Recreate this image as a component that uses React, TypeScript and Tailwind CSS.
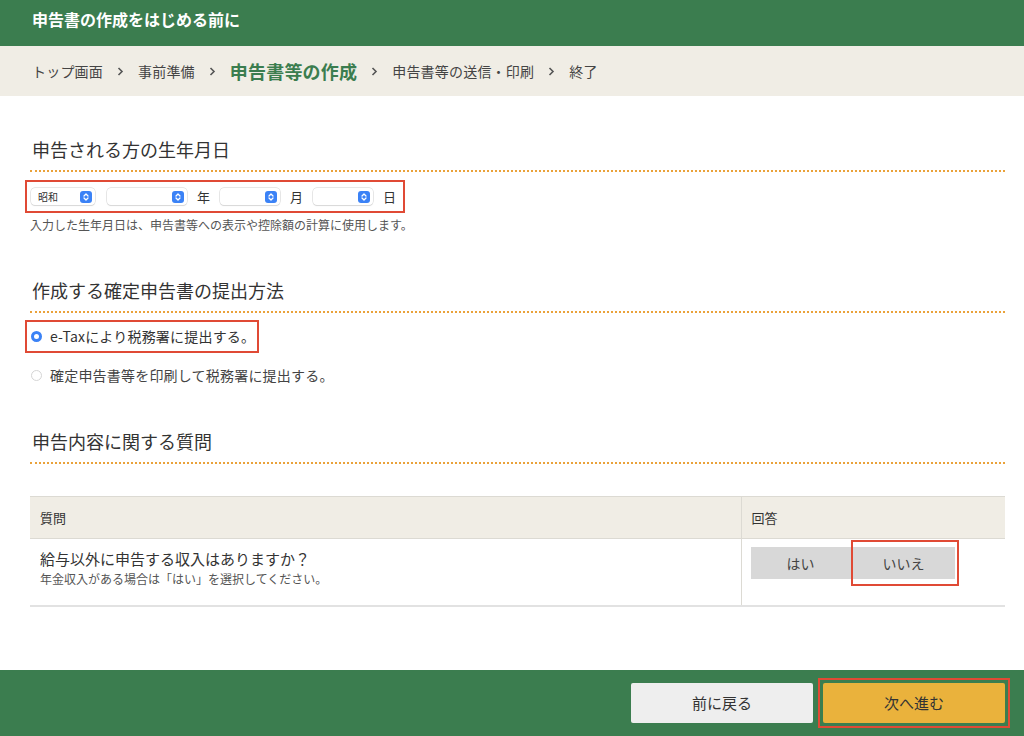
import React from "react";

const jp = { fontFamily: '"Noto Sans CJK JP", "Noto Sans", sans-serif' };

const SelectBox = ({ label, width }: { label?: string; width: string }) => (
  <div
    className={`${width} h-[17px] flex items-center justify-between bg-white rounded-[4px] pl-[7px] pr-[3px] shadow-[0_0_0_0.5px_#d0d0d0,0_1px_1px_rgba(0,0,0,0.12)]`}
  >
    <span className="text-[10px] leading-none text-[#333]">{label}</span>
    <span className="w-[12px] h-[12px] rounded-[3px] bg-[#3b82f6] flex items-center justify-center">
      <svg width="8" height="10" viewBox="0 0 8 10" fill="none">
        <path d="M2 4L4 2L6 4" stroke="white" strokeWidth="1.3" strokeLinecap="round" strokeLinejoin="round" />
        <path d="M2 6L4 8L6 6" stroke="white" strokeWidth="1.3" strokeLinecap="round" strokeLinejoin="round" />
      </svg>
    </span>
  </div>
);

const SectionTitle = ({ children }: { children: React.ReactNode }) => (
  <div>
    <h2 className="text-[18px] leading-[26px] text-[#333] pl-[2px]">{children}</h2>
    <div className="mt-[8px] border-b-2 border-dotted border-[#eaa23a]" />
  </div>
);

const Crumb = ({ children }: { children: React.ReactNode }) => (
  <span className="text-[14px] tracking-[0.2px] text-[#444]">{children}</span>
);

const Arrow = () => (
  <span className="mx-[14px] flex items-center">
    <svg width="7" height="9" viewBox="0 0 7 9" fill="none">
      <path d="M1.5 1L5 4.5L1.5 8" stroke="#555" strokeWidth="1.6" />
    </svg>
  </span>
);

export default function App() {
  return (
    <div className="w-[1024px] h-[736px] bg-white flex flex-col overflow-hidden" style={jp}>
      <header className="h-[46px] bg-[#3b7d4f] flex items-center px-[32px]">
        <h1 className="text-[16px] font-bold text-white -mt-[9px]">申告書の作成をはじめる前に</h1>
      </header>

      <nav className="h-[50px] bg-[#f0ede5] flex items-center px-[32px]">
        <Crumb>トップ画面</Crumb>
        <Arrow />
        <Crumb>事前準備</Crumb>
        <Arrow />
        <span className="text-[18px] font-bold tracking-[0.2px] text-[#3b7d4f]">申告書等の作成</span>
        <Arrow />
        <Crumb>申告書等の送信・印刷</Crumb>
        <Arrow />
        <Crumb>終了</Crumb>
      </nav>

      <main className="flex-1 pl-[30px] pr-[19px] pt-[40px]">
        <SectionTitle>申告される方の生年月日</SectionTitle>
        <div className="mt-[8px] w-[380px] h-[33px] -ml-[5px] border-2 border-[#e04a35] flex items-center gap-[10px] pl-[4px]">
          <SelectBox label="昭和" width="w-[64px]" />
          <div className="ml-[2px]">
            <SelectBox width="w-[80px]" />
          </div>
          <span className="text-[13px] text-[#333]">年</span>
          <SelectBox width="w-[60px]" />
          <span className="text-[13px] text-[#333]">月</span>
          <SelectBox width="w-[60px]" />
          <span className="text-[13px] text-[#333]">日</span>
        </div>
        <p className="mt-[3px] text-[12px] leading-[18px] text-[#555]">入力した生年月日は、申告書等への表示や控除額の計算に使用します。</p>

        <div className="mt-[43px]">
          <SectionTitle>作成する確定申告書の提出方法</SectionTitle>
        </div>
        <div className="mt-[7px] -ml-[5px] w-[234px] h-[33px] border-2 border-[#e04a35] flex items-center pl-[4px] gap-[8px]">
          <span className="w-[11px] h-[11px] rounded-full border-[3px] border-[#3b82f6] bg-white" />
          <span className="text-[14px] tracking-[0.2px] text-[#333]">e-Taxにより税務署に提出する。</span>
        </div>
        <div className="mt-[12px] flex items-center gap-[8px] pl-[1px]">
          <span className="w-[11px] h-[11px] rounded-full border border-[#d5d5d5] bg-white" />
          <span className="text-[14px] tracking-[0.2px] text-[#444]">確定申告書等を印刷して税務署に提出する。</span>
        </div>

        <div className="mt-[42px]">
          <SectionTitle>申告内容に関する質問</SectionTitle>
        </div>

        <table className="mt-[32px] w-full border-collapse">
          <thead>
            <tr className="bg-[#f0ede5] border-t border-b border-[#dcdad3]">
              <th className="h-[42px] text-left font-normal text-[13px] text-[#333] pl-[10px]">質問</th>
              <th className="w-[264px] text-left font-normal text-[13px] text-[#333] pl-[10px] border-l border-[#dcdad3]">回答</th>
            </tr>
          </thead>
          <tbody>
            <tr className="border-b-2 border-[#e2e2e2]">
              <td className="h-[67px] pl-[10px] align-top pt-[9px]">
                <div className="text-[15px] leading-[22px] text-[#333]">給与以外に申告する収入はありますか？</div>
                <div className="text-[12px] leading-[17px] text-[#555]">年金収入がある場合は「はい」を選択してください。</div>
              </td>
              <td className="border-l border-[#dcdad3] align-top pl-[9px] pt-[1px]">
                <div className="flex">
                  <div className="mt-[7px] w-[100px] h-[32px] bg-[#d8d8d8] flex items-center justify-center text-[14px] text-[#444]">
                    はい
                  </div>
                  <div className="w-[108px] h-[46px] border-2 border-[#e04a35] pt-[5px] pr-[4px]">
                    <div className="w-[102px] h-[32px] bg-[#d8d8d8] flex items-center justify-center text-[14px] text-[#444]">
                      いいえ
                    </div>
                  </div>
                </div>
              </td>
            </tr>
          </tbody>
        </table>
      </main>

      <footer className="h-[66px] bg-[#3b7d4f] flex items-center justify-end pr-[14px] gap-[5px]">
        <button className="w-[182px] h-[40px] bg-[#eeeeee] rounded-[2px] text-[15px] text-[#333]">前に戻る</button>
        <div className="w-[192px] h-[50px] border-2 border-[#e04a35] flex items-center justify-center">
          <button className="w-[182px] h-[40px] bg-[#eab23c] rounded-[2px] text-[15px] text-[#333]">次へ進む</button>
        </div>
      </footer>
    </div>
  );
}
